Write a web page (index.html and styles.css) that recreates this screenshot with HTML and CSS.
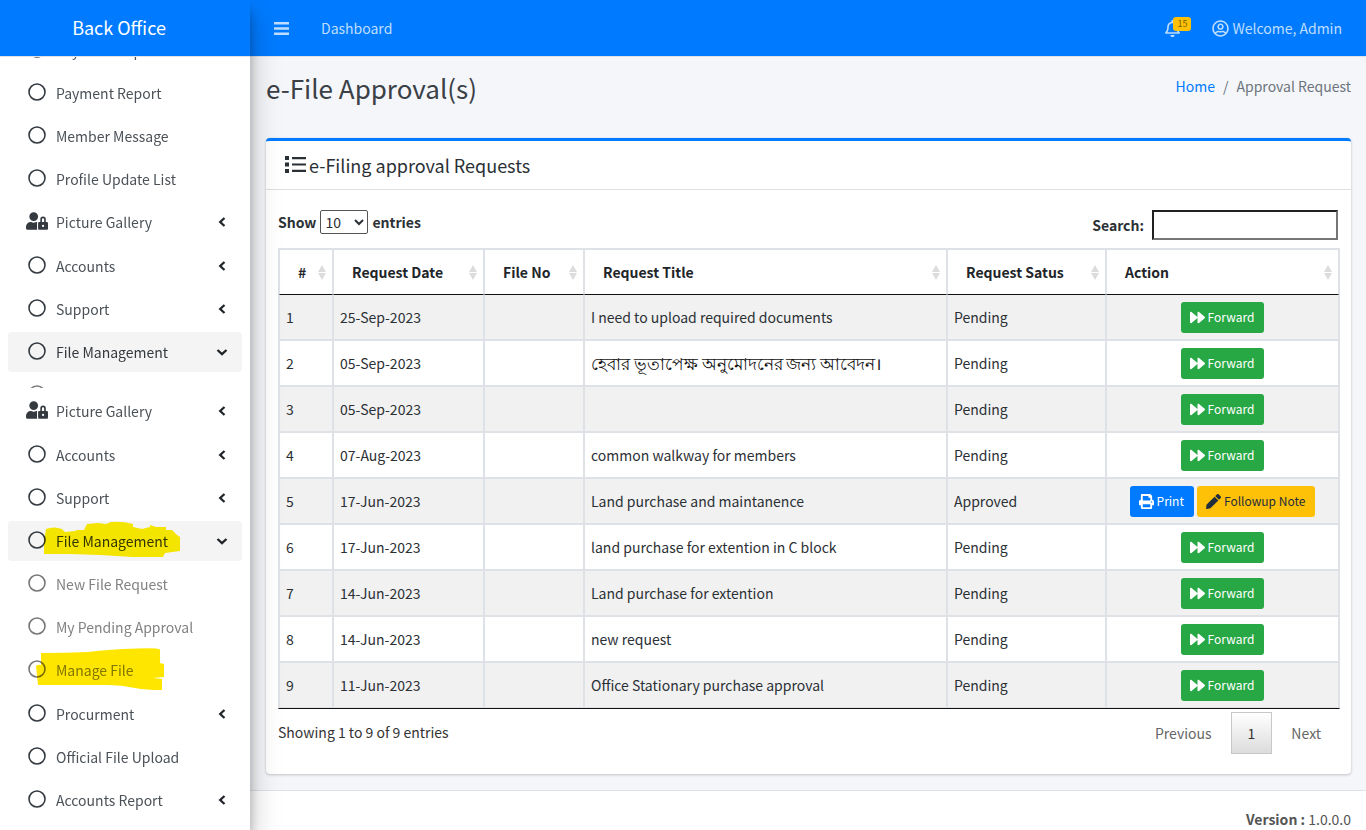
FILE: index.html
```html
<!DOCTYPE html>
<html lang="en">
<head>
<meta charset="utf-8">
<meta name="viewport" content="width=device-width, initial-scale=1">
<title>e-File Approval(s)</title>
<link rel="stylesheet" href="styles.css">
</head>
<body>
<svg class="sprite" aria-hidden="true">
  <symbol id="circle" viewBox="0 0 20 20"><circle cx="10" cy="10" r="8" fill="none" stroke="currentColor" stroke-width="1.6"/></symbol>
  <symbol id="left" viewBox="0 0 10 12"><path d="M7.5 2 3.2 6l4.300 4" fill="none" stroke="currentColor" stroke-width="2.300"/></symbol>
  <symbol id="down" viewBox="0 0 12 10"><path d="M1.500 3 6 7.200 10.500 3" fill="none" stroke="currentColor" stroke-width="2.300"/></symbol>
  <symbol id="userlock" viewBox="0 0 640 512"><path fill="currentColor" d="M224 256A128 128 0 1 0 96 128a128 128 0 0 0 128 128zm96 64a63.080 63.080 0 0 1 8.100-30.500c-4.800-.5-9.500-1.500-14.500-1.500h-16.700a174.080 174.080 0 0 1-145.800 0h-16.700A134.430 134.430 0 0 0 0 422.400V464a48 48 0 0 0 48 48h280.900a63.540 63.540 0 0 1-8.900-32zm288-32h-32v-80a80 80 0 0 0-160 0v80h-32a32 32 0 0 0-32 32v160a32 32 0 0 0 32 32h224a32 32 0 0 0 32-32V320a32 32 0 0 0-32-32zM496 432a32 32 0 1 1 32-32 32 32 0 0 1-32 32zm32-144h-64v-80a32 32 0 0 1 64 0z"/></symbol>
  <symbol id="forward" viewBox="0 0 512 512"><path fill="currentColor" d="M500.500 231.400l-192-160C287.900 54.300 256 68.600 256 96v320c0 27.400 31.900 41.800 52.500 24.600l192-160c15.300-12.800 15.300-36.400 0-49.200zm-256 0l-192-160C31.900 54.300 0 68.600 0 96v320c0 27.400 31.900 41.800 52.500 24.600l192-160c15.300-12.800 15.300-36.400 0-49.200z"/></symbol>
  <symbol id="print" viewBox="0 0 512 512"><path fill="currentColor" d="M448 192V77.250c0-8.490-3.370-16.620-9.370-22.630L393.370 9.370c-6-6-14.140-9.370-22.630-9.370H96C78.330 0 64 14.330 64 32v160c-35.350 0-64 28.650-64 64v112c0 8.840 7.160 16 16 16h48v96c0 17.670 14.330 32 32 32h320c17.670 0 32-14.330 32-32v-96h48c8.840 0 16-7.160 16-16V256c0-35.350-28.650-64-64-64zm-64 256H128v-96h256v96zm0-224H128V64h192v48c0 8.840 7.160 16 16 16h48v96zm48 72c-13.250 0-24-10.750-24-24 0-13.260 10.750-24 24-24s24 10.740 24 24c0 13.250-10.750 24-24 24z"/></symbol>
  <symbol id="pencil" viewBox="0 0 512 512"><path fill="currentColor" d="M497.900 142.100l-46.100 46.100c-4.700 4.700-12.300 4.700-17 0l-111-111c-4.700-4.700-4.700-12.300 0-17l46.100-46.100c18.700-18.700 49.100-18.700 67.900 0l60.100 60.100c18.800 18.700 18.800 49.100 0 67.900zM284.200 99.800L21.600 362.400.4 483.900c-2.900 16.400 11.400 30.600 27.800 27.800l121.500-21.300 262.600-262.600c4.700-4.700 4.700-12.300 0-17l-111-111c-4.800-4.700-12.400-4.700-17.100 0z"/></symbol>
  <symbol id="bell" viewBox="0 0 448 512"><path fill="currentColor" d="M439.390 362.290c-19.320-20.760-55.470-51.990-55.470-154.290 0-77.700-54.480-139.900-127.940-155.160V32c0-17.670-14.320-32-31.980-32s-31.980 14.330-31.980 32v20.840C118.560 68.100 64.080 130.300 64.080 208c0 102.300-36.150 133.530-55.470 154.290-6 6.450-8.660 14.160-8.610 21.710.11 16.400 12.980 32 32.100 32h383.800c19.120 0 32-15.600 32.100-32 .05-7.550-2.610-15.270-8.610-21.710zM67.530 368c21.220-27.970 44.420-74.330 44.530-159.420 0-.2-.06-.38-.06-.58 0-61.860 50.140-112 112-112s112 50.140 112 112c0 .2-.06.38-.06.58.11 85.100 23.310 131.460 44.530 159.420H67.530zM224 512c35.320 0 63.970-28.650 63.970-64H160.030c0 35.350 28.650 64 63.970 64z"/></symbol>
  <symbol id="user" viewBox="0 0 496 512"><path fill="currentColor" d="M248 104c-53 0-96 43-96 96s43 96 96 96 96-43 96-96-43-96-96-96zm0 144c-26.500 0-48-21.500-48-48s21.500-48 48-48 48 21.500 48 48-21.500 48-48 48zm0-240C111 8 0 119 0 256s111 248 248 248 248-111 248-248S385 8 248 8zm0 448c-49.700 0-95.100-18.300-130.100-48.400 14.900-23 40.400-38.600 69.600-39.500 20.800 6.400 40.600 9.600 60.500 9.600s39.700-3.100 60.500-9.600c29.200 1 54.700 16.500 69.600 39.500-35 30.100-80.400 48.400-130.100 48.400zm162.700-84.100c-24.400-31.400-62.100-51.900-105.100-51.900-10.200 0-26 9.600-57.600 9.600-31.500 0-47.400-9.600-57.600-9.600-42.900 0-80.600 20.500-105.100 51.900C61.900 339.200 48 299.200 48 256c0-110.300 89.700-200 200-200s200 89.700 200 200c0 43.200-13.900 83.200-37.300 115.900z"/></symbol>
  <symbol id="list" viewBox="0 0 21 17"><path fill="currentColor" d="M0 0h4v4H0zM0 6.500h4v4H0zM0 13h4v4H0zM7 1h14v2.200H7zM7 7.400h14v2.200H7zM7 13.800h14V16H7z"/></symbol>
  <symbol id="bars" viewBox="0 0 15 13"><path fill="currentColor" d="M0 0h15v2.500H0zM0 5.200h15v2.500H0zM0 10.400h15v2.500H0z"/></symbol>
  <symbol id="sort" viewBox="0 0 8 15"><path fill="currentColor" d="M0 7 4 0l4 7zM0 8h8l-4 7z"/></symbol>
</svg>
<div class="app">
  <aside class="sidebar">
    <a class="brand" href="#">Back Office</a>
    <nav class="menu" aria-label="Main">
      <ul class="menu-list">
        <li><a class="link" href="#"><svg class="dot"><use href="#circle"/></svg><span>Payment Report</span></a></li>
        <li><a class="link" href="#"><svg class="dot"><use href="#circle"/></svg><span>Payment Report</span></a></li>
        <li><a class="link" href="#"><svg class="dot"><use href="#circle"/></svg><span>Member Message</span></a></li>
        <li><a class="link" href="#"><svg class="dot"><use href="#circle"/></svg><span>Profile Update List</span></a></li>
        <li class="roomy"><a class="link" href="#"><svg class="dot dot-lock"><use href="#userlock"/></svg><span>Picture Gallery</span><svg class="caret"><use href="#left"/></svg></a></li>
        <li><a class="link" href="#"><svg class="dot"><use href="#circle"/></svg><span>Accounts</span><svg class="caret"><use href="#left"/></svg></a></li>
        <li><a class="link" href="#"><svg class="dot"><use href="#circle"/></svg><span>Support</span><svg class="caret"><use href="#left"/></svg></a></li>
        <li><a class="link open" href="#"><svg class="dot"><use href="#circle"/></svg><span>File Management</span><svg class="caret"><use href="#down"/></svg></a></li>
        <li class="cut"><a class="link sub" href="#" aria-label="New File Request"><svg class="dot"><use href="#circle"/></svg></a></li>
        <li class="roomy"><a class="link" href="#"><svg class="dot dot-lock"><use href="#userlock"/></svg><span>Picture Gallery</span><svg class="caret"><use href="#left"/></svg></a></li>
        <li><a class="link" href="#"><svg class="dot"><use href="#circle"/></svg><span>Accounts</span><svg class="caret"><use href="#left"/></svg></a></li>
        <li><a class="link" href="#"><svg class="dot"><use href="#circle"/></svg><span>Support</span><svg class="caret"><use href="#left"/></svg></a></li>
        <li><a class="link open" href="#"><svg class="dot"><use href="#circle"/></svg><span>File Management</span><svg class="caret"><use href="#down"/></svg><svg class="marker" viewBox="0 0 234 44"><path fill="#fff000" d="M36 33V20L38 8Q46 5 54 8L57 11 67 10 69 9H76L79 3 90 2 98 3 103 1Q115 0 125 3V6L134 8 142 6V4L148 6H158V9H164L169 14 172 16V30L157 32 155 36H125L92 34 62 33z"/></svg></a></li>
        <li><a class="link sub" href="#"><svg class="dot"><use href="#circle"/></svg><span>New File Request</span></a></li>
        <li><a class="link sub" href="#"><svg class="dot"><use href="#circle"/></svg><span>My Pending Approval</span></a></li>
        <li class="roomy"><a class="link sub" href="#"><svg class="dot"><use href="#circle"/></svg><span>Manage File</span><svg class="marker" viewBox="0 0 234 44"><path fill="#ffe600" d="M33 3q25 0 47-1Q102-1 129-1.500q20-1 23 1v13.500l4 1v13l-11 1 9 1v11q-16 0-27-2-14-3-27-3H30l-2-19q2-2 5-1z"/></svg></a></li>
        <li><a class="link" href="#"><svg class="dot"><use href="#circle"/></svg><span>Procurment</span><svg class="caret"><use href="#left"/></svg></a></li>
        <li><a class="link" href="#"><svg class="dot"><use href="#circle"/></svg><span>Official File Upload</span></a></li>
        <li><a class="link" href="#"><svg class="dot"><use href="#circle"/></svg><span>Accounts Report</span><svg class="caret"><use href="#left"/></svg></a></li>
      </ul>
    </nav>
  </aside>
  <div class="page">
    <header class="topbar">
      <button class="top-item burger" type="button" aria-label="Toggle menu"><svg><use href="#bars"/></svg></button>
      <a class="top-item" href="#">Dashboard</a>
      <a class="top-item bell" href="#" aria-label="Notifications"><svg><use href="#bell"/></svg><span class="badge">15</span></a>
      <a class="top-item user" href="#"><svg><use href="#user"/></svg>Welcome, Admin</a>
    </header>
    <main class="content">
      <div class="heading">
        <h1>e-File Approval(s)</h1>
        <nav class="crumbs" aria-label="Breadcrumb"><a href="#">Home</a><span>/</span><span>Approval Request</span></nav>
      </div>
      <section class="card">
        <h2 class="card-head"><svg><use href="#list"/></svg>e-Filing approval Requests</h2>
        <div class="card-body">
          <div class="tools">
            <label class="length">Show <select><option>10</option><option>25</option></select> entries</label>
            <label class="search">Search: <input type="search"></label>
          </div>
          <table class="grid">
            <colgroup><col class="c-num"><col class="c-date"><col class="c-file"><col><col class="c-status"><col class="c-action"></colgroup>
            <thead><tr>
              <th><div class="th">#<svg><use href="#sort"/></svg></div></th>
              <th><div class="th">Request Date<svg><use href="#sort"/></svg></div></th>
              <th><div class="th">File No<svg><use href="#sort"/></svg></div></th>
              <th><div class="th">Request Title<svg><use href="#sort"/></svg></div></th>
              <th><div class="th">Request Satus<svg><use href="#sort"/></svg></div></th>
              <th><div class="th">Action<svg><use href="#sort"/></svg></div></th>
            </tr></thead>
            <tbody>
              <tr><td>1</td><td>25-Sep-2023</td><td></td><td>I need to upload required documents</td><td>Pending</td><td><div class="acts"><button class="btn green" type="button"><svg><use href="#forward"/></svg>Forward</button></div></td></tr>
              <tr><td>2</td><td>05-Sep-2023</td><td></td><td><span class="bn" lang="bn">হেবার ভূতাপেক্ষ অনুমোদনের জন্য আবেদন।</span></td><td>Pending</td><td><div class="acts"><button class="btn green" type="button"><svg><use href="#forward"/></svg>Forward</button></div></td></tr>
              <tr><td>3</td><td>05-Sep-2023</td><td></td><td></td><td>Pending</td><td><div class="acts"><button class="btn green" type="button"><svg><use href="#forward"/></svg>Forward</button></div></td></tr>
              <tr><td>4</td><td>07-Aug-2023</td><td></td><td>common walkway for members</td><td>Pending</td><td><div class="acts"><button class="btn green" type="button"><svg><use href="#forward"/></svg>Forward</button></div></td></tr>
              <tr><td>5</td><td>17-Jun-2023</td><td></td><td>Land purchase and maintanence</td><td>Approved</td><td><div class="acts"><button class="btn blue" type="button"><svg><use href="#print"/></svg>Print</button><button class="btn amber" type="button"><svg><use href="#pencil"/></svg>Followup Note</button></div></td></tr>
              <tr><td>6</td><td>17-Jun-2023</td><td></td><td>land purchase for extention in C block</td><td>Pending</td><td><div class="acts"><button class="btn green" type="button"><svg><use href="#forward"/></svg>Forward</button></div></td></tr>
              <tr><td>7</td><td>14-Jun-2023</td><td></td><td>Land purchase for extention</td><td>Pending</td><td><div class="acts"><button class="btn green" type="button"><svg><use href="#forward"/></svg>Forward</button></div></td></tr>
              <tr><td>8</td><td>14-Jun-2023</td><td></td><td>new request</td><td>Pending</td><td><div class="acts"><button class="btn green" type="button"><svg><use href="#forward"/></svg>Forward</button></div></td></tr>
              <tr><td>9</td><td>11-Jun-2023</td><td></td><td>Office Stationary purchase approval</td><td>Pending</td><td><div class="acts"><button class="btn green" type="button"><svg><use href="#forward"/></svg>Forward</button></div></td></tr>
            </tbody>
          </table>
          <div class="foot">
            <div class="info">Showing 1 to 9 of 9 entries</div>
            <div class="pager"><button type="button">Previous</button><button class="current" type="button">1</button><button type="button">Next</button></div>
          </div>
        </div>
      </section>
    </main>
    <footer class="footer"><b>Version :</b> 1.0.0.0</footer>
  </div>
</div>
</body>
</html>
```

FILE: styles.css
```css
* { box-sizing: border-box; }
body {
  margin: 0;
  font-family: "Noto Sans CJK SC", "Noto Sans", sans-serif;
  font-size: 14px;
  line-height: 24px;
  font-weight: 400;
  color: #2b3035;
  background: #f4f6f9;
}
button, input, select { font: inherit; color: inherit; }
a { color: inherit; text-decoration: none; }
h1, h2, ul { margin: 0; padding: 0; font-weight: inherit; }
ul { list-style: none; }
.sprite { position: absolute; width: 0; height: 0; }
.app { display: flex; height: 100vh; overflow: hidden; }

.sidebar {
  position: relative;
  z-index: 2;
  flex: 0 0 250px;
  display: flex;
  flex-direction: column;
  background: #fff;
  box-shadow: 0 14px 28px rgba(0,0,0,.25), 0 10px 10px rgba(0,0,0,.22);
}
.brand {
  flex: none;
  height: 57px;
  padding: 15px 12px 0 0;
  background: #007bff;
  border-bottom: 1px solid #dee2e6;
  color: #fff;
  font-size: 18px;
  text-align: center;
}
.menu { flex: 1; min-height: 0; overflow: hidden; padding: 0 8px; color: #4b5157; }
.menu-list { display: flex; flex-direction: column; gap: 3px; margin-top: -27px; }
.roomy { padding-bottom: 1px; }
.cut { height: 13px; overflow: hidden; }
.link {
  position: relative;
  display: flex;
  align-items: center;
  gap: 6px;
  height: 40px;
  padding: 0 14px 0 16px;
  border-radius: 4px;
}
.link.open { background: #f4f4f4; color: #33383d; }
.link.sub { color: #828282; }
.dot { flex: none; width: 26px; height: 20px; margin-bottom: 2px; color: #343a40; }
.sub .dot { color: #777; }
.dot-lock { height: 18px; padding: 0 2px; }
.caret { width: 12px; height: 12px; margin-left: auto; color: #212529; }
.marker {
  position: absolute;
  left: 0;
  top: 0;
  width: 234px;
  height: 44px;
  overflow: visible;
  mix-blend-mode: multiply;
}

.page { flex: 1; min-width: 0; display: flex; flex-direction: column; }
.topbar {
  flex: none;
  display: flex;
  align-items: center;
  height: 57px;
  padding: 0 8px;
  background: #007bff;
  border-bottom: 1px solid #dee2e6;
  color: #bfdeff;
}
.top-item { display: flex; align-items: center; gap: 3px; padding: 0 16px; }
.burger { border: 0; background: none; }
.burger svg { width: 15px; height: 13px; }
.bell { position: relative; margin-left: auto; }
.bell svg { width: 15px; height: 17px; }
.badge {
  position: absolute;
  right: 5px;
  top: -3px;
  padding: 0 4px;
  border-radius: 3px;
  background: #ffc107;
  color: #7b5d03;
  font-size: 9px;
  line-height: 14px;
}
.user svg { width: 17px; height: 17px; }

.content { flex: none; padding: 0 15px 16px 16px; }
.heading { display: flex; justify-content: space-between; padding: 14px 0 33px; }
.heading h1 { font-size: 26px; line-height: 34px; color: #3a4046; }
.crumbs { display: flex; gap: 8px; padding-top: 3px; color: #6c757d; }
.crumbs a { color: #007bff; }

.card {
  border-top: 3px solid #007bff;
  border-radius: 4px;
  background: #fff;
  box-shadow: 0 0 1px rgba(0,0,0,.125), 0 1px 3px rgba(0,0,0,.2);
}
.card-head {
  display: flex;
  align-items: center;
  gap: 3px;
  height: 49px;
  padding: 0 19px 1px;
  border-bottom: 1px solid #dfdfdf;
  font-size: 18px;
}
.card-head svg { width: 21px; height: 17px; }
.card-body { padding: 20px 11px 20px 12px; }
.tools { display: flex; justify-content: space-between; height: 38px; font-weight: 700; }
.length { display: flex; gap: 4px; height: 24px; }
.length select {
  width: 48px;
  height: 24px;
  padding: 0;
  border: 1px solid #555;
  border-radius: 2px;
  background: #fff;
  font-weight: 400;
}
.search { display: flex; align-items: center; gap: 8px; height: 30px; padding-right: 2px; }
.search input { width: 186px; height: 30px; border: 2px inset #767676; font-weight: 400; }

.grid {
  width: 100%;
  table-layout: fixed;
  border-collapse: separate;
  border-spacing: 0;
  border: 1px solid #dee2e6;
  border-bottom-color: #111;
}
.c-num { width: 54px; }
.c-date { width: 151px; }
.c-file { width: 100px; }
.c-status { width: 159px; }
.c-action { width: 233px; }
.grid th {
  height: 46px;
  padding: 0 6px 0 18px;
  border: 1px solid #dee2e6;
  border-bottom-color: #111;
  color: #212529;
  text-align: left;
}
.th { display: flex; align-items: center; justify-content: space-between; }
.th svg { flex: none; width: 8px; height: 15px; color: #dcdcdc; }
.grid td { height: 46px; padding: 0 6px; border: 1px solid #dee2e6; }
.grid tbody tr:first-child td { height: 45px; border-top: 0; }
.grid tbody tr:nth-child(odd) { background: #f1f1f1; }
.grid .bn { font-size: 17px; color: #111; }
.acts { display: flex; justify-content: center; gap: 3px; }
.btn {
  display: flex;
  align-items: center;
  gap: 3px;
  height: 31px;
  padding: 0 10px 0 9px;
  border: 0;
  border-radius: 3px;
  font-size: 12px;
  color: #fff;
}
.btn svg { width: 15px; height: 15px; }
.green { background: #28a745; }
.blue { background: #007bff; }
.amber { background: #ffc107; color: #1f2d3d; }

.foot { display: flex; justify-content: space-between; padding-top: 3px; }
.info { padding-top: 8px; color: #333; }
.pager { display: flex; gap: 2px; padding-right: 2px; }
.pager button { height: 42px; padding: 0 16px; border: 1px solid transparent; background: none; color: #666; }
.pager .current { border-color: #c8c8c8; color: #333; background: linear-gradient(#fff, #dcdcdc); }

.footer {
  flex: 1;
  padding: 16px 15px 0 16px;
  border-top: 1px solid #dee2e6;
  background: #fff;
  text-align: right;
  color: #555;
}
```
